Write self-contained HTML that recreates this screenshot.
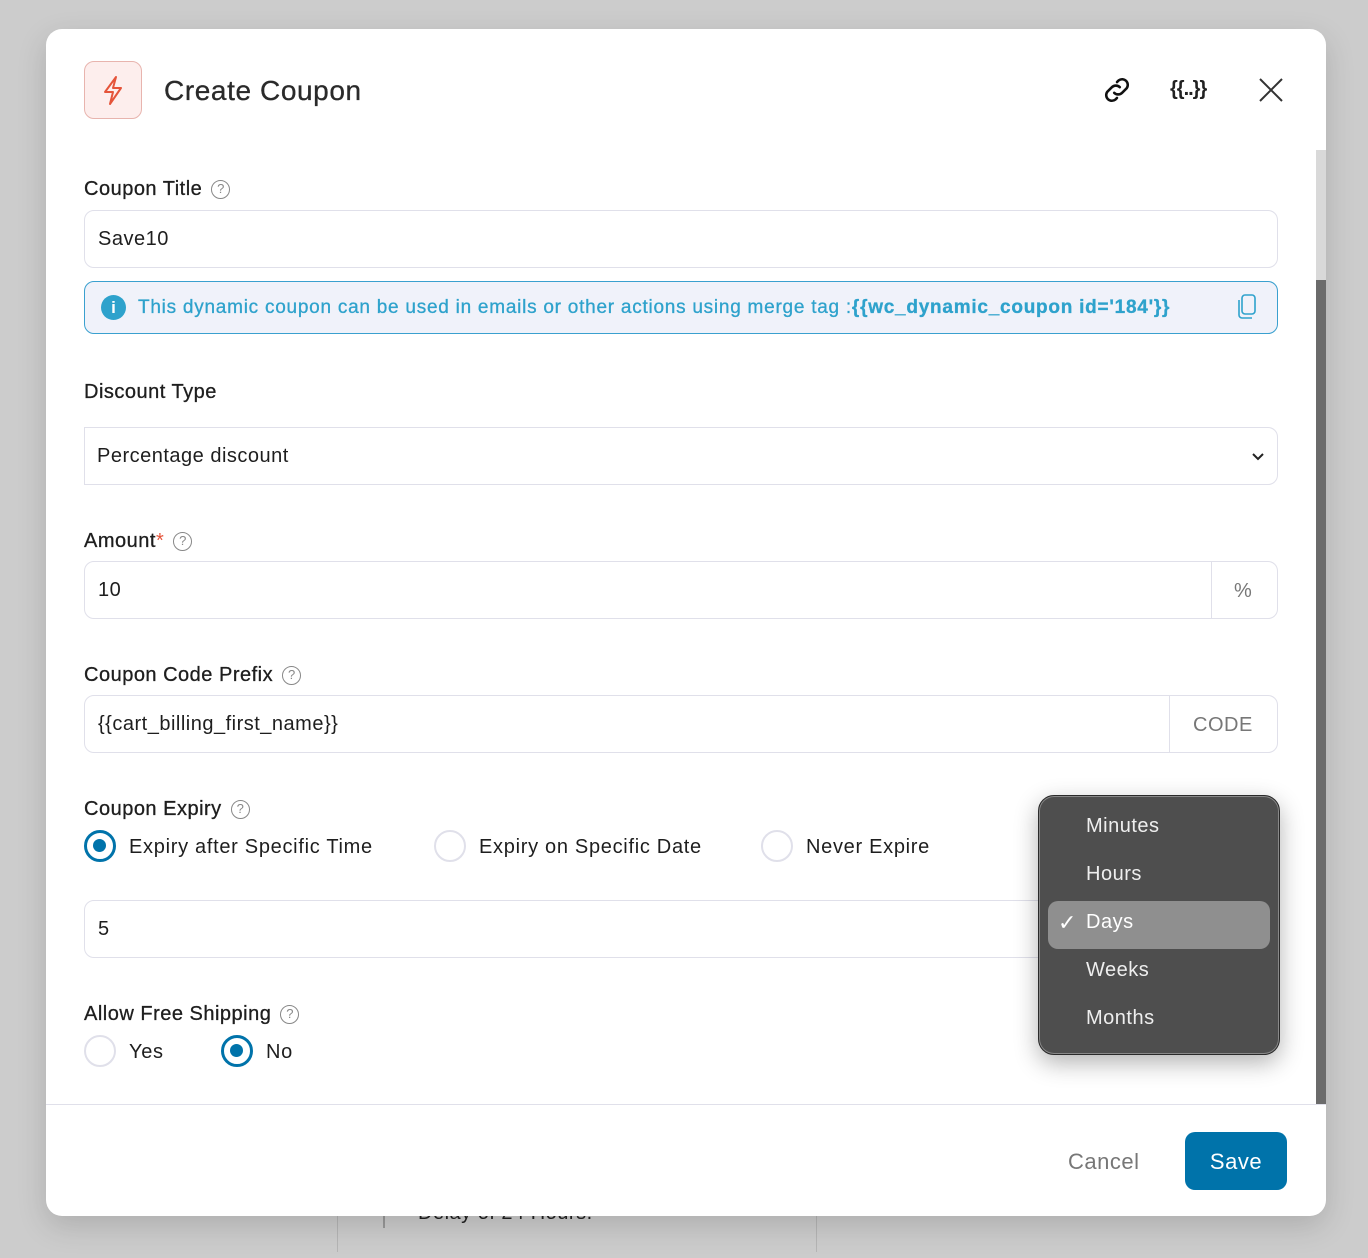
<!DOCTYPE html>
<html><head><meta charset="utf-8"><style>
*{box-sizing:border-box;margin:0;padding:0}
body{width:1368px;height:1258px;background:#cccccc;font-family:"Liberation Sans",sans-serif;position:relative;overflow:hidden;color:#1e1e1e;letter-spacing:0.5px}
.abs{position:absolute}
.modal{position:absolute;left:46px;top:29px;width:1280px;height:1187px;background:#fff;border-radius:16px;box-shadow:0 10px 30px rgba(0,0,0,.15);overflow:hidden}
.lbl{position:absolute;left:38px;font-size:20px;color:#1e1e1e;margin-top:2px;-webkit-text-stroke:0.3px #1e1e1e}
.q{display:inline-block;width:19px;height:19px;border:1.5px solid #888;border-radius:50%;font-size:13px;text-align:center;line-height:16px;color:#888;vertical-align:2px;margin-left:9px;letter-spacing:0;-webkit-text-stroke:0}
.inp{position:absolute;left:38px;width:1194px;height:58px;border:1px solid #e0e0ea;border-radius:10px;font-size:20px;padding-left:13px;line-height:56px;color:#1e1e1e}
.radio{position:absolute;width:32px;height:32px;border-radius:50%;border:2.5px solid #e0e0ea}
.radio.on{border:3.5px solid #0073aa}
.radio.on:after{content:"";position:absolute;left:6px;top:6px;width:13px;height:13px;border-radius:50%;background:#0073aa}
.rt{position:absolute;font-size:20px;color:#1e1e1e;margin-top:1px;letter-spacing:0.7px}
</style></head><body>
<div class="abs" style="left:337px;top:1200px;width:1px;height:52px;background:#b5b5b5"></div>
<div class="abs" style="left:383px;top:1200px;width:2px;height:28px;background:#999"></div>
<div class="abs" style="left:816px;top:1200px;width:1px;height:52px;background:#b5b5b5"></div>
<div class="abs" style="left:418px;top:1202px;font-size:20px;color:#222">Delay of 24 Hours.</div>
<div class="modal">
  <div class="abs" style="left:38px;top:32px;width:58px;height:58px;border:1px solid #e8b4ae;background:#fdeeed;border-radius:10px">
    <svg width="58" height="58" viewBox="0 0 58 58" style="position:absolute;left:-1px;top:-1px"><path d="M32 16 L21 31 H29 L26 43 L37 27 H29 Z" fill="none" stroke="#e5543a" stroke-width="2" stroke-linejoin="round"/></svg>
  </div>
  <div class="abs" style="left:118px;top:46px;font-size:28px;color:#2a2a2a;letter-spacing:0.6px;-webkit-text-stroke:0.3px #2a2a2a">Create Coupon</div>
  <svg class="abs" style="left:1054px;top:44px" width="34" height="34" viewBox="0 0 24 24" fill="none" stroke="#111" stroke-width="1.8" stroke-linecap="round"><path d="M10 14a4 4 0 0 0 5.6 0l3.2-3.2a4 4 0 0 0-5.6-5.6l-1.2 1.2"/><path d="M14 10a4 4 0 0 0-5.6 0l-3.2 3.2a4 4 0 0 0 5.6 5.6l1.2-1.2"/></svg>
  <div class="abs" style="left:1124px;top:49px;font-size:20px;font-weight:bold;color:#222;letter-spacing:-1px">{{..}}</div>
  <svg class="abs" style="left:1212px;top:48px" width="26" height="26" viewBox="0 0 26 26" stroke="#333" stroke-width="2"><path d="M2 2L24 24M24 2L2 24"/></svg>
  <div class="abs" style="left:1270px;top:121px;width:10px;height:130px;background:#d9d9d9"></div>
  <div class="abs" style="left:1270px;top:251px;width:10px;height:824px;background:#6b6b6b"></div>

  <div class="lbl" style="top:147px">Coupon Title<span class="q">?</span></div>
  <div class="inp" style="top:181px">Save10</div>
  <div class="abs" style="left:38px;top:252px;width:1194px;height:53px;border:1.5px solid #3aa0cf;background:#f0f2fa;border-radius:10px">
    <div class="abs" style="left:16px;top:13px;width:25px;height:25px;border-radius:50%;background:#2ea2cc;color:#fff;font-weight:bold;font-size:17px;text-align:center;line-height:25px;letter-spacing:0">i</div>
    <div class="abs" style="left:53px;top:15px;font-size:19px;color:#2ea2cc;letter-spacing:0.75px;-webkit-text-stroke:0.3px #2ea2cc;white-space:nowrap">This dynamic coupon can be used in emails or other actions using merge tag :<b>{{wc_dynamic_coupon id='184'}}</b></div>
    <svg class="abs" style="left:1150px;top:11px" width="24" height="28" viewBox="0 0 24 28" fill="none" stroke="#2ea2cc" stroke-width="1.6"><rect x="7" y="2" width="13" height="19" rx="3"/><path d="M4 7v15a3 3 0 0 0 3 3h10"/></svg>
  </div>

  <div class="lbl" style="top:350px">Discount Type</div>
  <div class="inp" style="top:398px;border-radius:0 10px 10px 0;padding-left:12px">Percentage discount
    <svg class="abs" style="left:1166px;top:24px" width="14" height="10" viewBox="0 0 14 10" fill="none" stroke="#222" stroke-width="2"><path d="M2 2l5 5 5-5"/></svg></div>

  <div class="lbl" style="top:499px">Amount<span style="color:#e5543a;-webkit-text-stroke:0">*</span><span class="q">?</span></div>
  <div class="inp" style="top:532px">10<div class="abs" style="left:1126px;top:0;width:1px;height:56px;background:#e0e0ea"></div><div class="abs" style="left:1149px;top:1px;color:#777">%</div></div>

  <div class="lbl" style="top:633px">Coupon Code Prefix<span class="q">?</span></div>
  <div class="inp" style="top:666px">{{cart_billing_first_name}}<div class="abs" style="left:1084px;top:0;width:1px;height:56px;background:#e0e0ea"></div><div class="abs" style="left:1108px;top:1px;color:#777">CODE</div></div>

  <div class="lbl" style="top:767px">Coupon Expiry<span class="q">?</span></div>
  <div class="radio on" style="left:38px;top:801px"></div><div class="rt" style="left:83px;top:806px">Expiry after Specific Time</div>
  <div class="radio" style="left:388px;top:801px"></div><div class="rt" style="left:433px;top:806px">Expiry on Specific Date</div>
  <div class="radio" style="left:715px;top:801px"></div><div class="rt" style="left:760px;top:806px">Never Expire</div>

  <div class="inp" style="top:871px">5</div>

  <div class="lbl" style="top:972px">Allow Free Shipping<span class="q">?</span></div>
  <div class="radio" style="left:38px;top:1006px"></div><div class="rt" style="left:83px;top:1011px">Yes</div>
  <div class="radio on" style="left:175px;top:1006px"></div><div class="rt" style="left:220px;top:1011px">No</div>

  <div class="abs" style="left:0;top:1075px;width:1280px;height:1px;background:#e0e0ea"></div>
  <div class="abs" style="left:1022px;top:1120px;font-size:22px;color:#777">Cancel</div>
  <div class="abs" style="left:1139px;top:1103px;width:102px;height:58px;background:#0073aa;border-radius:10px;color:#fff;font-size:22px;text-align:center;line-height:59px">Save</div>
</div>

<div class="abs" style="left:1038px;top:795px;width:242px;height:260px;background:#4e4e4e;border:1.5px solid #2a2a2a;border-radius:16px;box-shadow:inset 0 0 0 1px #888,0 8px 24px rgba(0,0,0,.3);color:#eee;font-size:20px">
  <div class="abs" style="left:47px;top:19px">Minutes</div>
  <div class="abs" style="left:47px;top:67px">Hours</div>
  <div class="abs" style="left:9px;top:105px;width:222px;height:48px;background:#8f8f8f;border-radius:10px"></div>
  <div class="abs" style="left:19px;top:114px;color:#fff;font-size:22px">✓</div>
  <div class="abs" style="left:47px;top:115px;color:#fff">Days</div>
  <div class="abs" style="left:47px;top:163px">Weeks</div>
  <div class="abs" style="left:47px;top:211px">Months</div>
</div>
</body></html>
